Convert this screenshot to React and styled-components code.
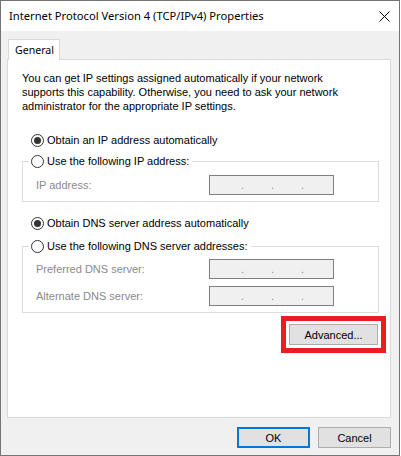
import React from 'react';
import styled, { createGlobalStyle } from 'styled-components';

const GlobalStyle = createGlobalStyle`
  html, body {
    margin: 0;
    padding: 0;
    background: #ffffff;
  }
  * {
    box-sizing: border-box;
  }
`;

const Window = styled.div`
  width: 400px;
  height: 456px;
  border: 1px solid #747474;
  background: #f0f0f0;
  display: flex;
  flex-direction: column;
  font-family: "Liberation Sans", Arial, sans-serif;
  font-size: 11px;
  color: #000;
`;

const TitleBar = styled.div`
  height: 30px;
  flex: none;
  background: #fff;
  display: flex;
  align-items: center;
  justify-content: space-between;
  padding: 0 9px 0 8px;
  font-family: "Noto Sans", "Open Sans", sans-serif;
  font-size: 11.2px;
`;

const Title = styled.span`
  line-height: 16px;
`;

const Body = styled.div`
  flex: 1;
  display: flex;
  flex-direction: column;
  padding: 8px 8px 7px 6px;
`;

const Tab = styled.div`
  position: relative;
  z-index: 1;
  align-self: flex-start;
  margin: 0 0 -1px 1px;
  width: 52px;
  height: 21px;
  padding: 3px 0 0 6px;
  background: #fff;
  border: 1px solid #d9d9d9;
  border-bottom: none;
  font-family: "Noto Sans", "Open Sans", sans-serif;
  font-size: 10.6px;
  line-height: 15px;
`;

const Panel = styled.div`
  flex: 1;
  background: #fff;
  border: 1px solid #d9d9d9;
  padding: 11px 11px 0 14px;
  display: flex;
  flex-direction: column;
`;

const Intro = styled.p`
  margin: 0;
  line-height: 14px;
`;

const Radio = styled.label`
  display: flex;
  align-items: center;
  gap: 3px;
  line-height: 13px;
  margin: ${(p) => p.$m || '0'};
  padding-left: ${(p) => (p.$inLegend ? '0' : '9px')};
`;

const Circle = styled.span`
  width: 13px;
  height: 13px;
  flex: none;
  border-radius: 50%;
  border: 1px solid #333;
  background: #fff;
  display: flex;
  align-items: center;
  justify-content: center;
  &::after {
    content: '';
    width: 7px;
    height: 7px;
    border-radius: 50%;
    background: ${(p) => (p.$on ? '#333' : 'transparent')};
  }
`;

const Group = styled.fieldset`
  margin: ${(p) => p.$m || '0'};
  padding: 0 0 6px 0;
  border: 1px solid #dcdcdc;
  min-width: 0;
`;

const Legend = styled.legend`
  margin-left: 6px;
  padding: 0 3px 0 2px;
`;

const Fields = styled.div`
  display: flex;
  flex-direction: column;
  gap: 7px;
  padding-left: 13px;
  margin-top: ${(p) => p.$top || '7px'};
`;

const FieldRow = styled.div`
  display: grid;
  grid-template-columns: 173px 125px;
  align-items: center;
`;

const FieldLabel = styled.span`
  color: #8a8a8a;
`;

const IpBox = styled.div`
  height: 20px;
  border: 1px solid #7f7f7f;
  background: #f0f0f0;
  display: flex;
  align-items: center;
  padding-left: 31px;
  gap: 27px;
  line-height: 13px;
`;

const Dot = styled.span`
  width: 3px;
  color: #8a8a8a;
`;

const AdvancedRow = styled.div`
  display: flex;
  justify-content: flex-end;
  margin-top: 11px;
  padding-right: 1px;
`;

const Button = styled.button`
  height: 21px;
  width: ${(p) => p.$w || '73px'};
  padding: 0;
  font-family: "Liberation Sans", Arial, sans-serif;
  font-size: 11px;
  color: #000;
  background: #e1e1e1;
  border: ${(p) => (p.$primary ? '2px solid #0078d7' : '1px solid #adadad')};
  border-radius: 0;
`;

const Highlight = styled.div`
  outline: 5px solid #ed1c24;
  outline-offset: 3px;
  display: flex;
`;

const Footer = styled.div`
  display: flex;
  justify-content: flex-end;
  gap: 8px;
  margin-top: 9px;
`;

const CloseIcon = () => (
  <svg width="11" height="11" viewBox="0 0 11 11">
    <path d="M0.5 0.5 L10.5 10.5 M10.5 0.5 L0.5 10.5" stroke="#000" strokeWidth="1" fill="none" />
  </svg>
);

const IpField = () => (
  <IpBox>
    <Dot>.</Dot>
    <Dot>.</Dot>
    <Dot>.</Dot>
  </IpBox>
);

export default function App() {
  return (
    <>
      <GlobalStyle />
      <Window>
        <TitleBar>
          <Title>Internet Protocol Version 4 (TCP/IPv4) Properties</Title>
          <CloseIcon />
        </TitleBar>
        <Body>
          <Tab>General</Tab>
          <Panel>
            <Intro>
              You can get IP settings assigned automatically if your network
              <br />
              supports this capability. Otherwise, you need to ask your network
              <br />
              administrator for the appropriate IP settings.
            </Intro>

            <Radio $m="21px 0 0 0">
              <Circle $on />
              Obtain an IP address automatically
            </Radio>
            <Group $m="8px 0 0 0">
              <Legend>
                <Radio $inLegend>
                  <Circle />
                  Use the following IP address:
                </Radio>
              </Legend>
              <Fields>
                <FieldRow>
                  <FieldLabel>IP address:</FieldLabel>
                  <IpField />
                </FieldRow>
              </Fields>
            </Group>

            <Radio $m="15px 0 0 0">
              <Circle $on />
              Obtain DNS server address automatically
            </Radio>
            <Group $m="10px 0 0 0">
              <Legend>
                <Radio $inLegend>
                  <Circle />
                  Use the following DNS server addresses:
                </Radio>
              </Legend>
              <Fields $top="6px">
                <FieldRow>
                  <FieldLabel>Preferred DNS server:</FieldLabel>
                  <IpField />
                </FieldRow>
                <FieldRow>
                  <FieldLabel>Alternate DNS server:</FieldLabel>
                  <IpField />
                </FieldRow>
              </Fields>
            </Group>

            <AdvancedRow>
              <Highlight>
                <Button $w="89px">Advanced...</Button>
              </Highlight>
            </AdvancedRow>
          </Panel>
          <Footer>
            <Button $primary>OK</Button>
            <Button>Cancel</Button>
          </Footer>
        </Body>
      </Window>
    </>
  );
}
